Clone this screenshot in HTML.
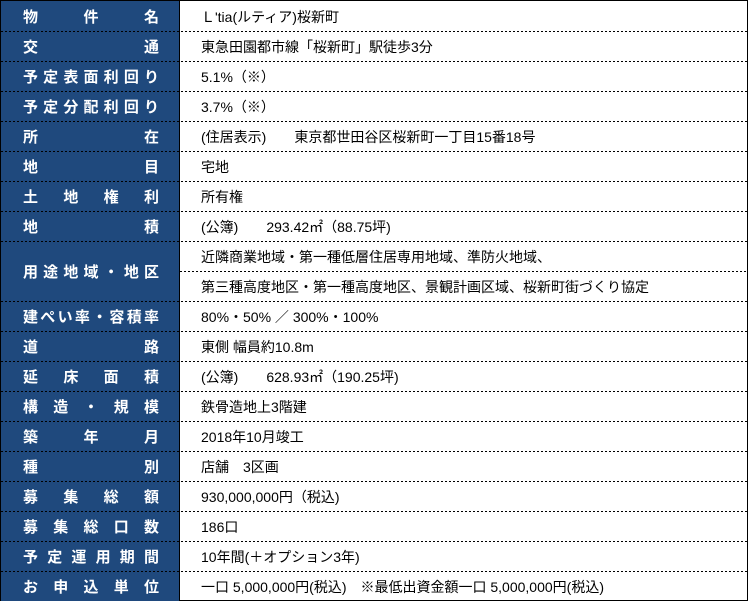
<!DOCTYPE html><html><head><meta charset="utf-8"><style>
body{margin:0;background:#fff;width:749px;height:602px;overflow:hidden;font-family:"Liberation Sans","Noto Sans CJK JP",sans-serif}
.t{position:absolute;left:0;top:0;width:746px;height:599px;border:1px solid #000;}
.l{position:absolute;left:0;width:178px;background:#1f497d;border-right:1px solid #000;}
.l span{position:absolute;left:22px;width:136px;color:#fff;font-weight:bold;font-size:15px;text-align:justify;text-align-last:justify;white-space:nowrap}
.r{position:absolute;left:179px;right:0;}
.r span{position:absolute;left:21px;font-size:14px;color:#000;white-space:nowrap}
.d{position:absolute;left:0;right:0;height:1px;background:repeating-linear-gradient(90deg,#000 0 2px,transparent 2px 4px)}
</style></head><body><div class="t" id="t"></div>
<script>
var rows=[["物件名","Ｌ'tia(ルティア)桜新町",1],["交通","東急田園都市線「桜新町」駅徒歩3分",1],["予定表面利回り","5.1%（※）",1],["予定分配利回り","3.7%（※）",1],["所在","(住居表示)　　東京都世田谷区桜新町一丁目15番18号",1],["地目","宅地",1],["土地権利","所有権",1],["地積","(公簿)　　293.42㎡（88.75坪)",1],["用途地域・地区",["近隣商業地域・第一種低層住居専用地域、準防火地域、","第三種高度地区・第一種高度地区、景観計画区域、桜新町街づくり協定"],2],["建ぺい率・容積率","80%・50% ／ 300%・100%",1],["道路","東側 幅員約10.8m",1],["延床面積","(公簿)　　628.93㎡（190.25坪)",1],["構造・規模","鉄骨造地上3階建",1],["築年月","2018年10月竣工",1],["種別","店舗　3区画",1],["募集総額","930,000,000円（税込)",1],["募集総口数","186口",1],["予定運用期間","10年間(＋オプション3年)",1],["お申込単位","一口 5,000,000円(税込)　※最低出資金額一口 5,000,000円(税込)",1]];
var h="",y=0;
rows.forEach(function(r,i){var hh=30*r[2];
h+='<div class="l" style="top:'+y+'px;height:'+hh+'px"><span style="top:'+(hh/2-10)+'px">'+r[0]+'</span></div>';
var vals=Array.isArray(r[1])?r[1]:[r[1]];
vals.forEach(function(v,k){h+='<div class="r" style="top:'+(y+30*k)+'px;height:30px"><span style="top:6px">'+v+'</span></div>';if(k>0)h+='<div class="d" style="top:'+(y+30*k)+'px;left:179px"></div>';});
if(i>0)h+='<div class="d" style="top:'+y+'px"></div>';
y+=hh;});
document.getElementById("t").innerHTML=h;
</script></body></html>
